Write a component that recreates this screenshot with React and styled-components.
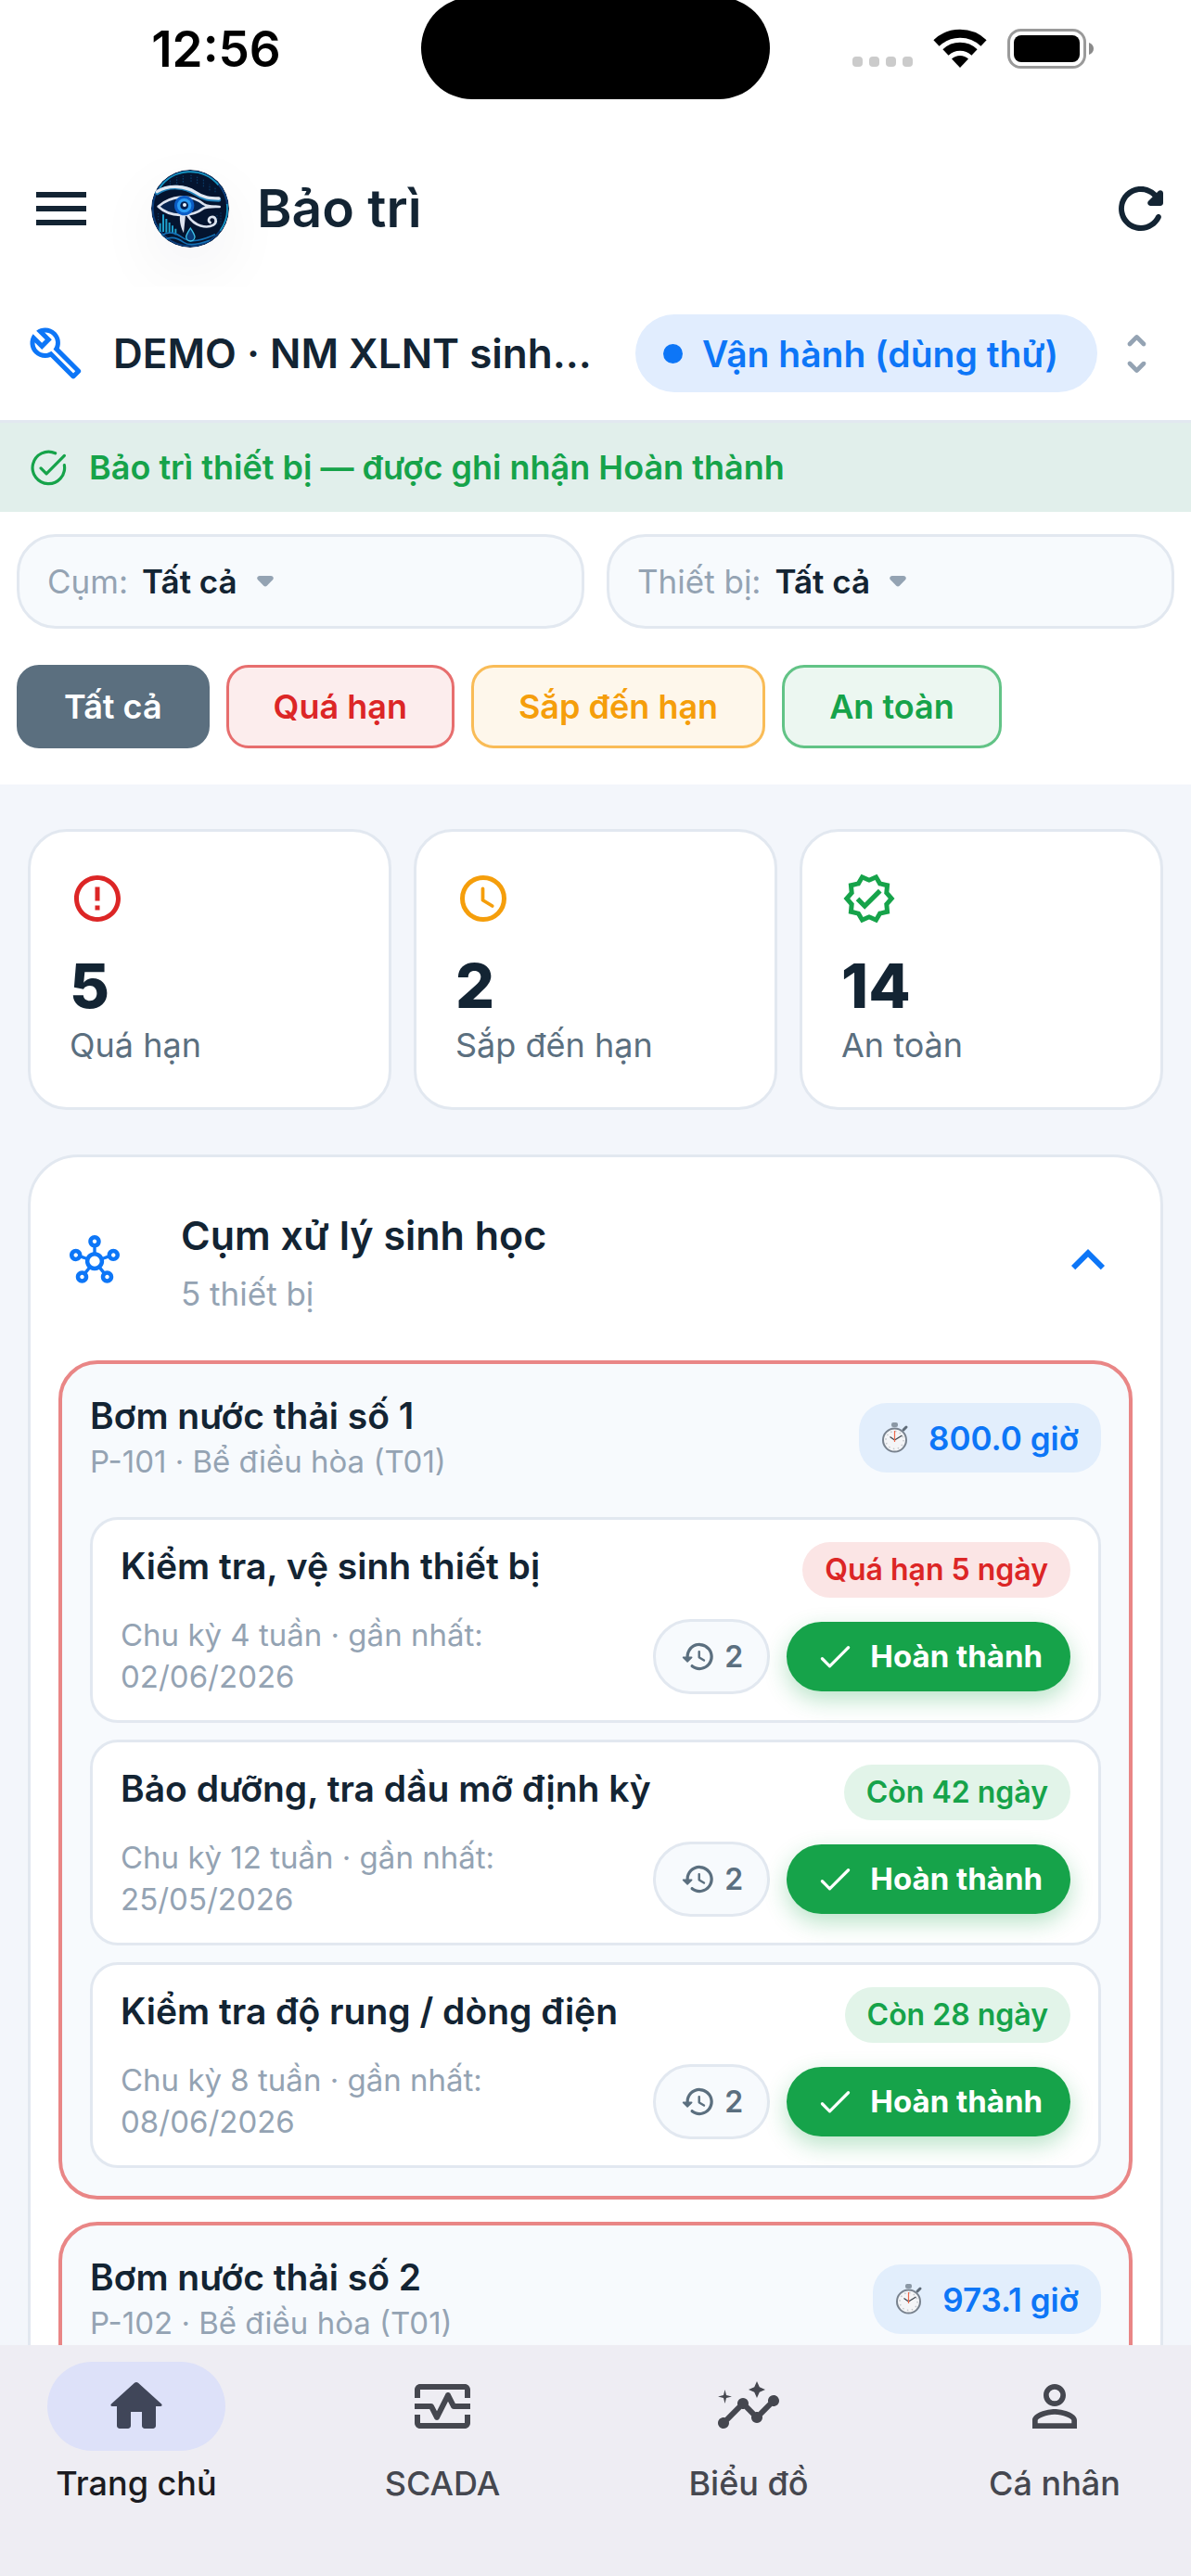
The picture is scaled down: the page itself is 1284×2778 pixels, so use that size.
import React from 'react'
import styled, { createGlobalStyle } from 'styled-components'
import {
  MdErrorOutline,
  MdExpandLess,
  MdMenu,
  MdOutlineBuild,
  MdOutlineHub,
  MdOutlineInsights,
  MdOutlineMonitorHeart,
  MdOutlineVerified,
  MdPersonOutline,
} from 'react-icons/md'

const ink = '#132433'
const slate = '#5B6F7F'
const muted = '#94A3B3'
const line = '#E2E8F0'
const blue = '#0D76F7'
const red = '#DC2626'
const amber = '#F59E0B'
const green = '#16A34A'

const GlobalStyle = createGlobalStyle`
  * {
    box-sizing: border-box;
  }

  body {
    margin: 0;
    background: #F3F6FB;
    color: ${ink};
    font-family: Inter, 'Noto Sans', sans-serif;
  }

  h1, h2, h3, h4, p {
    margin: 0;
  }

  button, select {
    font: inherit;
    cursor: pointer;
  }

  svg {
    display: block;
    flex-shrink: 0;
  }
`

const Screen = styled.div`
  height: 100vh;
  display: flex;
  flex-direction: column;
  overflow: hidden;
`

/* ---------- status bar ---------- */

const StatusBar = styled.div`
  height: 141px;
  flex-shrink: 0;
  background: #fff;
  display: grid;
  grid-template-columns: 1fr 376px 1fr;
  align-items: start;
`

const Clock = styled.div`
  padding: 21px 0 0 12px;
  text-align: center;
  font-size: 53px;
  line-height: 64px;
  font-weight: 600;
  color: #000;
`

const Island = styled.div`
  height: 110px;
  margin-top: -3px;
  border-radius: 55px;
  background: #000;
`

const StatusIcons = styled.div`
  height: 104px;
  padding-right: 104px;
  display: flex;
  justify-content: flex-end;
  align-items: center;
  gap: 22px;
`

/* ---------- header ---------- */

const AppBar = styled.header`
  height: 168px;
  flex-shrink: 0;
  padding: 0 18px 0 30px;
  background: #fff;
  display: flex;
  align-items: center;
  overflow: hidden;
`

const IconButton = styled.button`
  border: 0;
  padding: 0;
  background: none;
  color: ${ink};
  font-size: 72px;
  display: flex;
`

const Logo = styled.svg`
  width: 84px;
  height: 84px;
  margin: 0 30px 0 61px;
  border-radius: 50%;
  box-shadow: 0 24px 72px rgba(19, 36, 51, 0.06);
`

const PageTitle = styled.h1`
  flex: 1;
  font-size: 57px;
  line-height: 72px;
  font-weight: 600;
`

const PlantRow = styled.div`
  height: 147px;
  flex-shrink: 0;
  padding: 0 30px;
  background: #fff;
  border-bottom: 3px solid ${line};
  display: flex;
  align-items: center;
  gap: 32px;
`

const PlantIcon = styled.span`
  color: ${blue};
  font-size: 60px;
`

const PlantName = styled.h2`
  flex: 1;
  min-width: 0;
  font-size: 44px;
  line-height: 54px;
  font-weight: 600;
  white-space: nowrap;
  overflow: hidden;
  text-overflow: ellipsis;
`

const ModePill = styled.span`
  min-width: 498px;
  height: 84px;
  padding: 0 30px;
  border-radius: 42px;
  background: #E1EDFE;
  color: ${blue};
  display: flex;
  align-items: center;
  gap: 21px;
  font-size: 39px;
  font-weight: 600;
  white-space: nowrap;
`

const Dot = styled.i`
  width: 21px;
  height: 21px;
  border-radius: 50%;
  background: currentColor;
`

const SwitchButton = styled(IconButton)`
  margin-left: -18px;
  color: ${muted};
`

const Banner = styled.div`
  height: 96px;
  flex-shrink: 0;
  padding: 0 30px;
  background: #E1EFEB;
  color: ${green};
  display: flex;
  align-items: center;
  gap: 21px;
  font-size: 36px;
  font-weight: 600;
`

/* ---------- filters ---------- */

const Filters = styled.section`
  flex-shrink: 0;
  padding: 24px 18px 39px;
  background: #fff;
`

const SelectRow = styled.div`
  display: grid;
  grid-template-columns: 1fr 1fr;
  gap: 24px;
`

const SelectBox = styled.label`
  height: 102px;
  padding: 0 30px;
  border: 3px solid ${line};
  border-radius: 42px;
  background: #F7FAFD;
  color: ${muted};
  display: flex;
  align-items: center;
  font-size: 35px;
`

const Select = styled.select`
  appearance: none;
  margin: 0 21px 0 15px;
  padding: 0;
  border: 0;
  background: none;
  color: ${ink};
  font-weight: 600;
`

const ChipRow = styled.div`
  margin-top: 39px;
  display: flex;
  gap: 18px;
`

const Chip = styled.button`
  height: 90px;
  padding: 0 48px;
  border: 3px solid ${({ $border }) => $border};
  border-radius: 24px;
  background: ${({ $bg }) => $bg};
  color: ${({ $color }) => $color};
  font-size: 36px;
  font-weight: 600;
  white-space: nowrap;
`

/* ---------- content ---------- */

const Content = styled.main`
  flex: 1;
  min-height: 0;
  padding: 48px 30px;
  overflow-y: auto;
  scrollbar-width: none;
`

const Stats = styled.div`
  display: grid;
  grid-template-columns: repeat(3, 1fr);
  gap: 24px;
  margin-bottom: 48px;
`

const StatCard = styled.div`
  padding: 42px;
  border: 3px solid ${line};
  border-radius: 42px;
  background: #fff;
  color: ${({ $color }) => $color};
  font-size: 60px;
`

const StatValue = styled.p`
  margin-top: 24px;
  color: ${ink};
  font-size: 66px;
  line-height: 80px;
  font-weight: 800;
`

const StatLabel = styled.p`
  color: ${slate};
  font-size: 36px;
  line-height: 49px;
`

const Group = styled.section`
  padding: 0 30px 30px;
  border: 3px solid ${line};
  border-radius: 54px;
  background: #fff;
`

const GroupHead = styled.div`
  height: 219px;
  padding: 3px 12px 0;
  display: flex;
  align-items: center;
  gap: 66px;
  color: ${blue};
  font-size: 54px;
`

const GroupText = styled.div`
  flex: 1;
`

const GroupTitle = styled.h3`
  color: ${ink};
  font-size: 43px;
  line-height: 72px;
  font-weight: 600;
`

const GroupSub = styled.p`
  color: ${muted};
  font-size: 35px;
  line-height: 54px;
`

const ToggleButton = styled(IconButton)`
  color: ${blue};
`

const Device = styled.article`
  padding: 30px;
  border: 4px solid #E98686;
  border-radius: 42px;
  background: #F7FAFD;

  & + & {
    margin-top: 24px;
  }
`

const DeviceHead = styled.div`
  margin-bottom: 36px;
  display: flex;
  justify-content: space-between;
  align-items: center;
`

const DeviceName = styled.h4`
  font-size: 39px;
  line-height: 51px;
  font-weight: 600;
`

const DeviceSub = styled.p`
  color: ${muted};
  font-size: 33px;
  line-height: 48px;
`

const HoursPill = styled.span`
  height: 75px;
  padding: 0 24px;
  border-radius: 30px;
  background: #E2EEFC;
  color: ${blue};
  display: flex;
  align-items: center;
  gap: 21px;
  font-size: 35px;
  font-weight: 600;
`

const TaskList = styled.div`
  display: grid;
  gap: 18px;
`

const Task = styled.div`
  padding: 24px 30px;
  border: 3px solid ${line};
  border-radius: 30px;
  background: #fff;
`

const TaskTop = styled.div`
  display: flex;
  justify-content: space-between;
  align-items: flex-start;
`

const TaskName = styled.h4`
  font-size: 39px;
  line-height: 51px;
  font-weight: 600;
`

const DueBadge = styled.span`
  height: 60px;
  padding: 0 24px;
  border-radius: 30px;
  background: ${({ $late }) => ($late ? '#FBE5E5' : '#E2F4E9')};
  color: ${({ $late }) => ($late ? red : green)};
  font-size: 32px;
  line-height: 60px;
  font-weight: 600;
`

const TaskBottom = styled.div`
  margin-top: 18px;
  display: flex;
  align-items: center;
  gap: 18px;
`

const TaskMeta = styled.p`
  flex: 1;
  color: ${muted};
  font-size: 33px;
  line-height: 45px;
`

const HistoryButton = styled.button`
  height: 81px;
  padding: 0 26px;
  border: 3px solid ${line};
  border-radius: 41px;
  background: #F7FAFD;
  color: ${slate};
  display: flex;
  align-items: center;
  gap: 9px;
  font-size: 32px;
  font-weight: 600;
`

const DoneButton = styled.button`
  height: 75px;
  padding: 0 30px;
  border: 0;
  border-radius: 38px;
  background: ${green};
  color: #fff;
  box-shadow: 0 9px 24px rgba(22, 163, 74, 0.3);
  display: flex;
  align-items: center;
  gap: 15px;
  font-size: 33px;
  font-weight: 700;
`

/* ---------- bottom navigation ---------- */

const BottomNav = styled.nav`
  height: 249px;
  flex-shrink: 0;
  padding: 18px 51px;
  background: #EEEDF3;
  display: flex;
  justify-content: space-between;
`

const NavItem = styled.a`
  width: 192px;
  display: flex;
  flex-direction: column;
  align-items: center;
  gap: 12px;
  color: ${({ $active }) => ($active ? '#1B1B21' : '#45474F')};
  font-size: 36px;
  line-height: 46px;
  font-weight: 500;
  text-decoration: none;
  white-space: nowrap;
`

const NavIcon = styled.span`
  width: 192px;
  height: 96px;
  border-radius: 48px;
  background: ${({ $active }) => ($active ? '#DDE1F9' : 'none')};
  color: ${({ $active }) => ($active ? '#404659' : '#45474F')};
  display: flex;
  justify-content: center;
  align-items: center;
  font-size: 72px;
`

/* ---------- icons ---------- */

const Icon = ({ size, children }) => (
  <svg width={size} height={size} viewBox="0 0 24 24" fill="currentColor" aria-hidden="true">
    {children}
  </svg>
)

const StrokeIcon = ({ size, width = 2, children }) => (
  <svg
    width={size}
    height={size}
    viewBox="0 0 24 24"
    fill="none"
    stroke="currentColor"
    strokeWidth={width}
    strokeLinecap="round"
    strokeLinejoin="round"
    aria-hidden="true"
  >
    {children}
  </svg>
)

const SignalDots = () => (
  <svg width="65" height="11" viewBox="0 0 65 11" fill="#CBCBCB">
    <rect width="11" height="11" rx="4" />
    <rect x="18" width="11" height="11" rx="4" />
    <rect x="36" width="11" height="11" rx="4" />
    <rect x="54" width="11" height="11" rx="4" />
  </svg>
)

const SignalWrap = styled.span`
  padding-top: 28px;
`

const Wifi = () => (
  <svg width="58" height="42" viewBox="0 0 58 42" fill="none" stroke="#000" strokeWidth="9">
    <path d="M3.5 15.5a37 37 0 0 1 51 0" />
    <path d="M13.5 25.5a22.5 22.5 0 0 1 31 0" />
    <path d="M29 42l-9-9.5a13 13 0 0 1 18 0z" fill="#000" stroke="none" />
  </svg>
)

const Battery = () => (
  <svg width="94" height="43" viewBox="0 0 94 43">
    <rect x="1.5" y="1.5" width="82" height="40" rx="13" fill="none" stroke="#9A9A9A" strokeWidth="3" />
    <rect x="7" y="7" width="71" height="29" rx="8" fill="#000" />
    <path d="M88 15c3 .8 5 3.4 5 6.5s-2 5.7-5 6.5z" fill="#8A8A8A" />
  </svg>
)

const EyeLogo = () => (
  <Logo viewBox="39 39 252 252" aria-hidden="true">
    <circle cx="165" cy="165" r="126" fill="#04142F" />
    <circle cx="165" cy="165" r="121" fill="none" stroke="#0B3D7A" strokeWidth="6" />
    <path d="M66 98a120 120 0 0 1 190-10M284 150a120 120 0 0 1-22 86" fill="none" stroke="#1899C4" strokeWidth="5" />
    <g fill="none" stroke="#0E5A96" strokeWidth="2">
      <path d="M100 88v-14M122 84v-20M142 80v-22M168 78v-22M188 84v-22M208 94v-24M228 106v-20M246 112v-14" strokeDasharray="5 4" />
      <path d="M62 180v24M264 178v40M252 186v30" strokeDasharray="4 5" />
    </g>
    <path d="M62 158c40-38 104-44 156 0-46 38-116 36-156 0z" fill="#062450" />
    <g fill="none" strokeLinecap="round">
      <path d="M58 114c40-28 92-20 124 2 26 18 46 20 76 20" stroke="#1E7FB8" strokeWidth="14" />
      <path d="M58 110c40-24 92-18 124 2 26 18 46 20 76 20" stroke="#E2E8F2" strokeWidth="10" />
      <path d="M62 158c40-36 104-42 146-8 12 8 24 9 52 9M62 158c36 34 104 38 146 6 10-5 20-6 52-5" stroke="#DCE3EF" strokeWidth="8" />
      <path d="M158 188c22 34 60 42 82 30 14-10 8-28-6-26-10 2-12 14-4 18" stroke="#DCE3EF" strokeWidth="8" />
    </g>
    <path d="M132 186h18l-6 58c-8-16-14-34-12-58z" fill="#DCE3EF" />
    <circle cx="146" cy="155" r="32" fill="#0B5CC4" />
    <circle cx="146" cy="155" r="23" fill="#2C9DF5" />
    <circle cx="146" cy="155" r="13" fill="#05204F" />
    <circle cx="147" cy="153" r="6" fill="#E8F6FF" />
    <path d="M68 240v-28M78 240v-56M88 242v-44M98 244v-34M108 246v-26M118 250v-20" stroke="#1FA0CC" strokeWidth="6" />
    <g fill="none" stroke="#1571B5" strokeWidth="5">
      <path d="M72 252c28-18 50-6 70 8s50 14 104-12" />
      <path d="M86 264c24-12 44 0 58 10s46 8 84-6" />
    </g>
    <path d="M166 228c10 16 14 22 14 28a14 14 0 0 1-28 0c0-6 4-12 14-28z" fill="#0B3D7A" stroke="#3FC3EA" strokeWidth="4" />
  </Logo>
)

const Stopwatch = () => (
  <svg width="30" height="36" viewBox="0 0 30 36" aria-hidden="true">
    <rect x="11" y="1" width="7" height="5" rx="2" fill="#8B98A5" />
    <path d="M24 9l3-3" stroke="#5F6B78" strokeWidth="3" strokeLinecap="round" />
    <circle cx="14.5" cy="20" r="12.5" fill="#F4F5F7" stroke="#78828E" strokeWidth="2" />
    <circle cx="14.5" cy="20" r="9.5" fill="none" stroke="#C3C7CC" strokeWidth="1.5" strokeDasharray="1.5 3.5" />
    <path d="M14.5 20l-5-3.5M14.5 20l8-5" stroke="#3E464F" strokeWidth="1.3" />
    <path d="M14.5 22V10" stroke="#F0694A" strokeWidth="1.2" />
  </svg>
)

const HistoryIcon = () => (
  <Icon size={39}>
    <path d="M13.26 3C8.17 2.86 4 6.95 4 12H2.21c-.45 0-.67.54-.35.85l2.79 2.8c.2.2.51.2.71 0l2.79-2.8c.31-.31.09-.85-.36-.85H6c0-3.9 3.18-7.05 7.1-7 3.72.05 6.85 3.18 6.9 6.9.05 3.91-3.1 7.1-7 7.1-1.61 0-3.1-.55-4.28-1.48-.4-.31-.96-.28-1.32.08-.42.42-.39 1.13.08 1.49C9 20.29 10.91 21 13 21c5.05 0 9.14-4.17 9-9.26-.13-4.69-4.05-8.61-8.74-8.74zm-.51 5c-.41 0-.75.34-.75.75v3.68c0 .35.19.68.49.86l3.12 1.85c.36.21.82.09 1.03-.26.21-.36.09-.82-.26-1.03l-2.88-1.71v-3.4c0-.4-.34-.74-.75-.74z" />
  </Icon>
)

/* ---------- data ---------- */

const chips = [
  { label: 'Tất cả', color: '#fff', bg: slate, border: slate },
  { label: 'Quá hạn', color: red, bg: '#FCEDED', border: '#E76E6E' },
  { label: 'Sắp đến hạn', color: amber, bg: '#FEF7EB', border: '#F9BC57' },
  { label: 'An toàn', color: green, bg: '#ECF7F1', border: '#62C386' },
]

const stats = [
  { label: 'Quá hạn', value: 5, color: red, icon: <MdErrorOutline /> },
  {
    label: 'Sắp đến hạn',
    value: 2,
    color: amber,
    icon: (
      <StrokeIcon size={60}>
        <circle cx="12" cy="12" r="9" />
        <path d="M11.8 7.7v5l4.1 2.5" strokeWidth="1.5" />
      </StrokeIcon>
    ),
  },
  { label: 'An toàn', value: 14, color: green, icon: <MdOutlineVerified /> },
]

const devices = [
  {
    name: 'Bơm nước thải số 1',
    sub: 'P-101 · Bể điều hòa (T01)',
    hours: '800.0 giờ',
    tasks: [
      { name: 'Kiểm tra, vệ sinh thiết bị', cycle: 4, last: '02/06/2026', due: 'Quá hạn 5 ngày', late: true },
      { name: 'Bảo dưỡng, tra dầu mỡ định kỳ', cycle: 12, last: '25/05/2026', due: 'Còn 42 ngày' },
      { name: 'Kiểm tra độ rung / dòng điện', cycle: 8, last: '08/06/2026', due: 'Còn 28 ngày' },
    ],
  },
  { name: 'Bơm nước thải số 2', sub: 'P-102 · Bể điều hòa (T01)', hours: '973.1 giờ', tasks: [] },
]

const navItems = [
  {
    label: 'Trang chủ',
    active: true,
    icon: (
      <Icon size={72}>
        <path d="M10 19v-5h4v5c0 .55.45 1 1 1h3c.55 0 1-.45 1-1v-7h1.7c.46 0 .68-.57.33-.87L12.67 3.6c-.38-.34-.96-.34-1.34 0l-8.36 7.53c-.34.3-.13.87.33.87H5v7c0 .55.45 1 1 1h3c.55 0 1-.45 1-1z" />
      </Icon>
    ),
  },
  { label: 'SCADA', icon: <MdOutlineMonitorHeart /> },
  { label: 'Biểu đồ', icon: <MdOutlineInsights /> },
  { label: 'Cá nhân', icon: <MdPersonOutline /> },
]

const FilterSelect = ({ label }) => (
  <SelectBox>
    {label}
    <Select>
      <option>Tất cả</option>
    </Select>
    <svg width="18" height="12" viewBox="0 0 18 12" fill="currentColor" aria-hidden="true">
      <path d="M3 0h12c2.5 0 3.6 2.6 2 4.3l-6.3 6.5c-1 1-2.4 1-3.4 0L1 4.3C-.6 2.6.5 0 3 0z" />
    </svg>
  </SelectBox>
)

const TaskCard = ({ task }) => (
  <Task>
    <TaskTop>
      <TaskName>{task.name}</TaskName>
      <DueBadge $late={task.late}>{task.due}</DueBadge>
    </TaskTop>
    <TaskBottom>
      <TaskMeta>
        Chu kỳ {task.cycle} tuần · gần nhất: {task.last}
      </TaskMeta>
      <HistoryButton>
        <HistoryIcon />2
      </HistoryButton>
      <DoneButton>
        <StrokeIcon size={45} width={1.7}>
          <path d="M4.5 13.2l4.3 4.3L19.5 6.8" />
        </StrokeIcon>
        Hoàn thành
      </DoneButton>
    </TaskBottom>
  </Task>
)

const App = () => {
  return (
    <Screen>
      <GlobalStyle />

      <StatusBar>
        <Clock>12:56</Clock>
        <Island />
        <StatusIcons>
          <SignalWrap>
            <SignalDots />
          </SignalWrap>
          <Wifi />
          <Battery />
        </StatusIcons>
      </StatusBar>

      <AppBar>
        <IconButton aria-label="Menu">
          <MdMenu />
        </IconButton>
        <EyeLogo />
        <PageTitle>Bảo trì</PageTitle>
        <IconButton aria-label="Tải lại">
          <Icon size={72}>
            <path d="M17.65 6.35c-1.63-1.63-3.94-2.57-6.48-2.31-3.67.37-6.69 3.35-7.1 7.02C3.52 15.91 7.27 20 12 20c3.19 0 5.93-1.87 7.21-4.56.32-.67-.16-1.44-.9-1.44-.37 0-.72.2-.88.53-1.13 2.43-3.84 3.97-6.8 3.31-2.22-.49-4.01-2.3-4.48-4.52C5.31 9.44 8.26 6 12 6c1.66 0 3.14.69 4.22 1.78l-1.51 1.51c-.63.63-.19 1.71.7 1.71H19c.55 0 1-.45 1-1V6.41c0-.89-1.08-1.34-1.71-.71l-.64.65z" />
          </Icon>
        </IconButton>
      </AppBar>

      <PlantRow>
        <PlantIcon>
          <MdOutlineBuild />
        </PlantIcon>
        <PlantName>DEMO · NM XLNT sinh...</PlantName>
        <ModePill>
          <Dot />
          Vận hành (dùng thử)
        </ModePill>
        <SwitchButton aria-label="Đổi nhà máy">
          <Icon size={57}>
            <path d="M12 5.83l2.46 2.46c.39.39 1.02.39 1.41 0 .39-.39.39-1.02 0-1.41L12.7 3.7c-.39-.39-1.02-.39-1.41 0L8.12 6.88c-.39.39-.39 1.02 0 1.41.39.39 1.02.39 1.41 0L12 5.83zm0 12.34l-2.46-2.46c-.39-.39-1.02-.39-1.41 0-.39.39-.39 1.02 0 1.41l3.17 3.18c.39.39 1.02.39 1.41 0l3.17-3.17c.39-.39.39-1.02 0-1.41-.39-.39-1.02-.39-1.41 0L12 18.17z" />
          </Icon>
        </SwitchButton>
      </PlantRow>

      <Banner>
        <StrokeIcon size={45} width={1.7}>
          <path d="M21 10.5a9.2 9.2 0 1 1-5.2-6.9" />
          <path d="M7.5 12.2l3.2 3.2L21 5" />
        </StrokeIcon>
        Bảo trì thiết bị — được ghi nhận Hoàn thành
      </Banner>

      <Filters>
        <SelectRow>
          <FilterSelect label="Cụm:" />
          <FilterSelect label="Thiết bị:" />
        </SelectRow>
        <ChipRow>
          {chips.map((chip) => (
            <Chip key={chip.label} $color={chip.color} $bg={chip.bg} $border={chip.border}>
              {chip.label}
            </Chip>
          ))}
        </ChipRow>
      </Filters>

      <Content>
        <Stats>
          {stats.map((stat) => (
            <StatCard key={stat.label} $color={stat.color}>
              {stat.icon}
              <StatValue>{stat.value}</StatValue>
              <StatLabel>{stat.label}</StatLabel>
            </StatCard>
          ))}
        </Stats>

        <Group>
          <GroupHead>
            <MdOutlineHub />
            <GroupText>
              <GroupTitle>Cụm xử lý sinh học</GroupTitle>
              <GroupSub>5 thiết bị</GroupSub>
            </GroupText>
            <ToggleButton aria-label="Thu gọn">
              <MdExpandLess />
            </ToggleButton>
          </GroupHead>

          {devices.map((device) => (
            <Device key={device.name}>
              <DeviceHead>
                <div>
                  <DeviceName>{device.name}</DeviceName>
                  <DeviceSub>{device.sub}</DeviceSub>
                </div>
                <HoursPill>
                  <Stopwatch />
                  {device.hours}
                </HoursPill>
              </DeviceHead>
              <TaskList>
                {device.tasks.map((task) => (
                  <TaskCard key={task.name} task={task} />
                ))}
              </TaskList>
            </Device>
          ))}
        </Group>
      </Content>

      <BottomNav>
        {navItems.map((item) => (
          <NavItem key={item.label} href="#" $active={item.active}>
            <NavIcon $active={item.active}>{item.icon}</NavIcon>
            {item.label}
          </NavItem>
        ))}
      </BottomNav>
    </Screen>
  )
}

export default App
